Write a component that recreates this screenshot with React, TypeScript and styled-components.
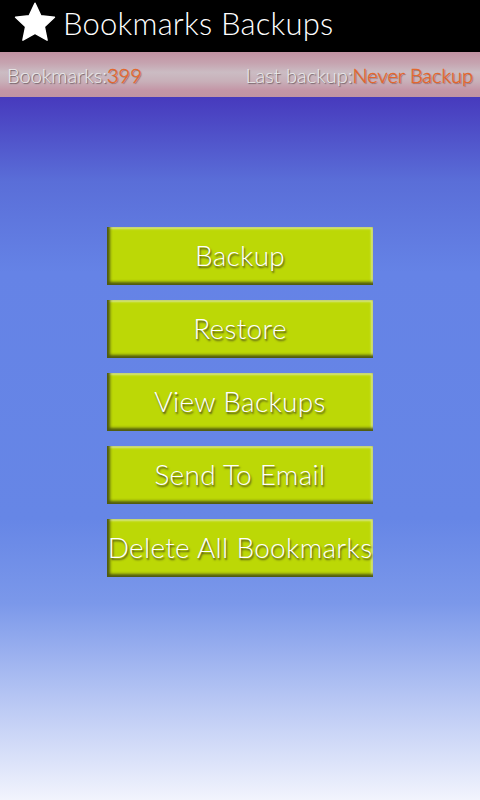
import styled, { createGlobalStyle } from 'styled-components';

const actions = ['Backup', 'Restore', 'View Backups', 'Send To Email', 'Delete All Bookmarks'];

const GlobalStyle = createGlobalStyle`
  html, body {
    margin: 0;
    padding: 0;
  }
  body {
    font-family: Lato, "Open Sans", sans-serif;
  }
`;

function StarIcon() {
  return (
    <svg width="44" height="44" viewBox="0 0 24 24">
      <path
        d="M12 1.2l3.2 6.9 7.4.8-5.5 5.1 1.5 7.4L12 17.6l-6.6 3.8 1.5-7.4-5.5-5.1 7.4-.8z"
        fill="#fff"
        stroke="#fff"
        strokeWidth="0.8"
        strokeLinejoin="round"
      />
    </svg>
  );
}

function App() {
  return (
    <Screen>
      <GlobalStyle />
      <TitleBar>
        <StarIcon />
        <Title>Bookmarks Backups</Title>
      </TitleBar>
      <StatusBar>
        <Stat>
          Bookmarks:<Value>399</Value>
        </Stat>
        <Stat>
          Last backup:<Value>Never Backup</Value>
        </Stat>
      </StatusBar>
      <Content>
        <ButtonList>
          {actions.map((label) => (
            <ActionButton key={label}>{label}</ActionButton>
          ))}
        </ButtonList>
      </Content>
    </Screen>
  );
}

const Screen = styled.div`
  width: 480px;
  height: 800px;
  display: flex;
  flex-direction: column;
  overflow: hidden;
`;
const TitleBar = styled.div`
  height: 52px;
  background: #000;
  display: flex;
  align-items: center;
  gap: 6px;
  padding-left: 13px;
  box-sizing: border-box;
  svg {
    margin-top: -6px;
  }
`;
const Title = styled.h1`
  margin: 0 0 6px 0;
  color: #fff;
  font-weight: 300;
  font-size: 31px;
  letter-spacing: 0.2px;
`;
const StatusBar = styled.div`
  height: 45px;
  display: flex;
  align-items: center;
  justify-content: space-between;
  padding: 0 7px 0 7px;
  box-sizing: border-box;
  background: linear-gradient(
    to bottom,
    #c292a2 0%,
    #c6a4b0 25%,
    #cbbcc3 45%,
    #c8b0b9 65%,
    #c496a6 85%,
    #c093a3 100%
  );
`;
const Stat = styled.span`
  color: #ececec;
  font-size: 20px;
  font-weight: 300;
  text-shadow: 1px 1px 1px #6a5a60;
`;
const Value = styled.span`
  color: #e4662a;
  font-weight: 300;
  -webkit-text-stroke: 0.4px #e4662a;
  text-shadow: 1px 1px 1px #8a6a70;
`;
const Content = styled.div`
  flex: 1;
  display: flex;
  justify-content: center;
  background: linear-gradient(
    to bottom,
    #473abd 0%,
    #5a6ed8 12%,
    #6583e6 25%,
    #6686e6 60%,
    #7b98ea 72%,
    #b4c4f3 85%,
    #f2f4fd 100%
  );
`;
const ButtonList = styled.div`
  display: flex;
  flex-direction: column;
  gap: 15px;
  padding-top: 130px;
`;
const ActionButton = styled.button`
  width: 266px;
  height: 58px;
  padding: 0 0 3px 0;
  border: none;
  background: #bcd806;
  box-shadow:
    inset 4px 0 3px -1px #4f5a10,
    inset 0 -4px 3px -1px #4f5a10,
    inset 0 3px 2px -1px #dcec8a,
    inset -3px 0 2px -1px #dcec8a;
  color: #fff;
  font-family: Lato, "Open Sans", sans-serif;
  font-weight: 300;
  font-size: 28px;
  letter-spacing: 0.3px;
  white-space: nowrap;
  overflow: visible;
  text-shadow: 1px 2px 2px #4a4a1a;
  cursor: pointer;
`;

export default App;
